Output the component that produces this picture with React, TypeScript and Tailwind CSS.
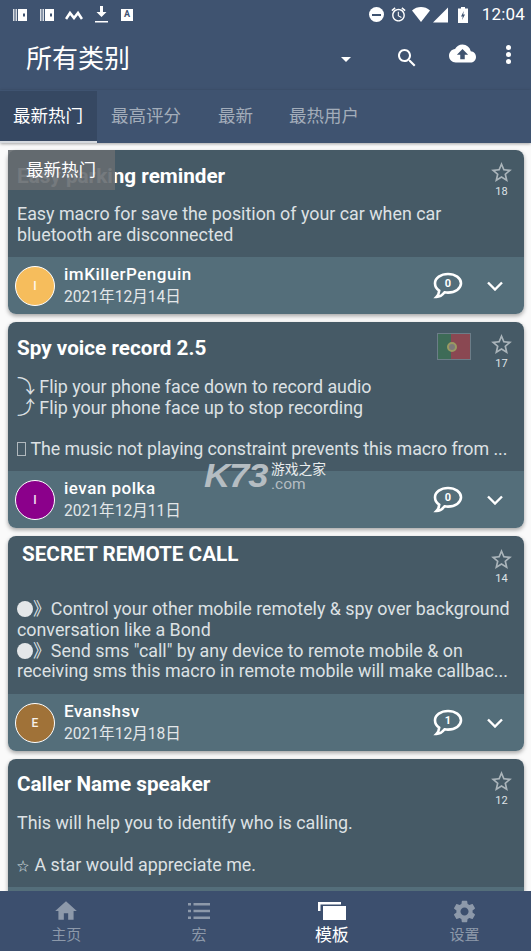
const FONT = "font-['Roboto','Noto_Sans_CJK_SC',sans-serif]";

const PATHS = {
  search:
    'M15.5 14h-.79l-.28-.27C15.41 12.59 16 11.11 16 9.5 16 5.91 13.09 3 9.5 3S3 5.91 3 9.5 5.91 16 9.5 16c1.61 0 3.09-.59 4.23-1.57l.27.28v.79l5 4.99L20.49 19l-4.99-5zm-6 0C7.01 14 5 11.99 5 9.5S7.01 5 9.5 5 14 7.01 14 9.5 11.99 14 9.5 14z',
  cloud:
    'M19.35 10.04C18.67 6.59 15.64 4 12 4 9.11 4 6.6 5.64 5.35 8.04 2.34 8.36 0 10.91 0 14c0 3.31 2.69 6 6 6h13c2.76 0 5-2.24 5-5 0-2.64-2.05-4.78-4.65-4.96zM14 13v4h-4v-4H7l5-5 5 5h-3z',
  star:
    'M22 9.24l-7.19-.62L12 2 9.19 8.63 2 9.24l5.46 4.73L5.82 21 12 17.27 18.18 21l-1.63-7.03L22 9.24zM12 15.4l-3.76 2.27 1-4.28-3.32-2.88 4.38-.38L12 6.1l1.71 4.04 4.38.38-3.32 2.88 1 4.28L12 15.4z',
  home: 'M10 20v-6h4v6h5v-8h3L12 3 2 12h3v8z',
  settings:
    'M19.14 12.94c.04-.3.06-.61.06-.94 0-.32-.02-.64-.07-.94l2.03-1.58c.18-.14.23-.41.12-.61l-1.92-3.32c-.12-.22-.37-.29-.59-.22l-2.39.96c-.5-.38-1.03-.7-1.62-.94l-.36-2.54c-.04-.24-.24-.41-.48-.41h-3.84c-.24 0-.43.17-.47.41l-.36 2.54c-.59.24-1.13.57-1.62.94l-2.39-.96c-.22-.08-.47 0-.59.22L2.74 8.87c-.12.21-.08.47.12.61l2.03 1.58c-.05.3-.09.63-.09.94s.02.64.07.94l-2.03 1.58c-.18.14-.23.41-.12.61l1.92 3.32c.12.22.37.29.59.22l2.39-.96c.5.38 1.03.7 1.62.94l.36 2.54c.05.24.24.41.48.41h3.84c.24 0 .44-.17.47-.41l.36-2.54c.59-.24 1.13-.56 1.62-.94l2.39.96c.22.08.47 0 .59-.22l1.92-3.32c.12-.22.07-.47-.12-.61l-2.01-1.58zM12 15.6c-1.98 0-3.6-1.62-3.6-3.6s1.62-3.6 3.6-3.6 3.6 1.62 3.6 3.6-1.62 3.6-3.6 3.6z',
  alarm:
    'M22 5.72l-4.6-3.86-1.29 1.53 4.6 3.86L22 5.72zM7.88 3.39L6.6 1.86 2 5.71l1.29 1.53 4.59-3.85zM12.5 8H11v6l4.75 2.85.75-1.23-4-2.37V8zM12 4c-4.97 0-9 4.03-9 9s4.02 9 9 9c4.97 0 9-4.03 9-9s-4.03-9-9-9zm0 16c-3.87 0-7-3.13-7-7s3.13-7 7-7 7 3.13 7 7-3.13 7-7 7z',
};

function Icon({ d, className }: { d: string; className: string }) {
  return (
    <svg viewBox="0 0 24 24" fill="currentColor" className={className}>
      <path d={d} />
    </svg>
  );
}

function WalletIcon({ className }: { className: string }) {
  return (
    <svg viewBox="0 0 14 12" fill="currentColor" className={className}>
      <path opacity="0.8" d="M0 0h1.500v12H0zM2.500 0h1.500v12H2.500z" />
      <path fillRule="evenodd" d="M5 0h9v12H5zM10 4.500v3h2v-3z" />
    </svg>
  );
}

function StatusBar() {
  return (
    <div className="h-[29px] flex items-center justify-between pl-[13px] pr-[6px] text-white">
      <div className="flex items-center">
        <WalletIcon className="w-[14px] h-[12px]" />
        <WalletIcon className="w-[14px] h-[12px] ml-[13px]" />
        <svg viewBox="0 0 18 10" fill="none" stroke="currentColor" strokeWidth="2.6" className="w-[18px] h-[10px] ml-[11px]">
          <path d="M1 9l4-6 4 5 4-5 4 6" />
        </svg>
        <svg viewBox="0 0 13 17" fill="currentColor" className="w-[13px] h-[17px] ml-[12px]">
          <path d="M5 0h3v6h3.5L6.5 11 1.5 6H5zM0 15h13v1.6H0z" />
        </svg>
        <div className="w-[12px] h-[12px] ml-[13px] bg-white text-[#3f5370] text-[9px] leading-[11px] font-bold text-center">A</div>
      </div>
      <div className="flex items-center">
        <div className="w-[15px] h-[15px] rounded-full bg-white flex items-center justify-center">
          <div className="w-[9px] h-[2px] bg-[#3f5370]" />
        </div>
        <Icon d={PATHS.alarm} className="w-[17px] h-[17px] ml-[6px]" />
        <svg viewBox="0 0 36 16" fill="currentColor" className="w-[36px] h-[16px] ml-[5px]">
          <path d="M0 3.500C2.500 1 5.800 0 9 0s6.500 1 9 3.500L9 15z" />
          <path d="M21 15.500L36 0.500v15z" />
        </svg>
        <svg viewBox="0 0 10 16" fill="currentColor" className="w-[10px] h-[16px] ml-[10px]">
          <path fillRule="evenodd" d="M3 0h4v1.500h3V16H0V1.500h3zM5.800 4L3 9.500h1.800L4 13l3-5.500H5.200z" />
        </svg>
        <span className="ml-[14px] text-[17px] leading-none tracking-[0.2px]">12:04</span>
      </div>
    </div>
  );
}

function Toolbar() {
  return (
    <div className="h-[61px] flex items-start text-white">
      <div className="pl-[26px] pt-[13px] text-[26px] leading-[35px] flex-1">所有类别</div>
      <div className="w-0 h-0 mt-[28px] border-x-[5px] border-x-transparent border-t-[5px] border-t-white" />
      <Icon d={PATHS.search} className="w-[24px] h-[24px] mt-[17px] ml-[44px]" />
      <Icon d={PATHS.cloud} className="w-[27px] h-[27px] mt-[11px] ml-[30px]" />
      <div className="flex flex-col gap-[2px] mt-[16px] ml-[30px] mr-[20px]">
        <div className="w-[5px] h-[5px] rounded-full bg-white" />
        <div className="w-[5px] h-[5px] rounded-full bg-white" />
        <div className="w-[5px] h-[5px] rounded-full bg-white" />
      </div>
    </div>
  );
}

function Tabs() {
  return (
    <div className="h-[53px] flex text-[17.500px] text-[#a3adba] shadow-[0_1px_3px_rgba(0,0,0,0.35)] relative z-10 bg-[#3f5370]">
      <div className="w-[97px] h-[52px] mt-px bg-[#364862] border-b-2 border-[#d5d9de] text-white pl-[13px] pt-[12px] leading-[26px]">最新热门</div>
      <div className="pl-[14px] pt-[13px] leading-[26px]">最高评分</div>
      <div className="pl-[37px] pt-[13px] leading-[26px]">最新</div>
      <div className="pl-[36px] pt-[13px] leading-[26px]">最热用户</div>
    </div>
  );
}

function Comment({ count }: { count: number }) {
  return (
    <div className="relative w-[30px] h-[28px]">
      <svg viewBox="0 0 30 28" fill="none" className="w-[30px] h-[28px]">
        <path
          d="M15 2c7.200 0 13 4 13 9.300s-5.800 9.300-13 9.300c-1.200 0-2.300-.1-3.400-.3C9.500 23 6.500 25 3.500 25c1.500-1.500 2.500-3.500 2.700-6.300C3.500 17 2 14.300 2 11.300 2 6 7.800 2 15 2z"
          stroke="white"
          strokeWidth="2.600"
        />
      </svg>
      <span className="absolute left-0 right-0 top-[5px] text-center text-[11px] leading-[14px] font-bold text-white">{count}</span>
    </div>
  );
}

function Dot() {
  return <span className="inline-block w-[16px] h-[16px] rounded-full bg-[#e4e7e9] align-[-2px]" />;
}

interface Author {
  name: string;
  date: string;
  initial: string;
  color: string;
  comments: number;
}

interface CardProps {
  title: string;
  titleClass?: string;
  stars: number;
  starTop: string;
  bodyHeight: string;
  author?: Author;
  flag?: boolean;
  children: React.ReactNode;
}

function Card({ title, titleClass, stars, starTop, bodyHeight, author, flag, children }: CardProps) {
  return (
    <div className="ml-[8px] mr-[7px] rounded-[8px] overflow-hidden shadow-[0_2px_4px_rgba(0,0,0,0.35)] shrink-0">
      <div className={`bg-[#465a66] relative px-[9px] ${bodyHeight}`}>
        <div className={`text-white font-bold text-[20.700px] leading-[26px] ${titleClass ?? 'pt-[13px]'}`}>{title}</div>
        {flag && (
          <div className="absolute left-[429px] top-[11px] w-[34px] h-[27px] flex border border-[#6c7d88]">
            <div className="w-[40%] bg-[#3e6b57]" />
            <div className="flex-1 bg-[#8a4852]" />
            <div className="absolute left-[9px] top-[8px] w-[10px] h-[10px] rounded-full border-2 border-[#9a9a62] bg-[#7d7a7a]" />
          </div>
        )}
        <div className={`absolute right-[10px] flex flex-col items-center ${starTop}`}>
          <Icon d={PATHS.star} className="w-[25px] h-[25px] text-[#aab4ba]" />
          <span className="text-[11px] leading-[14px] text-[#dfe3e6]">{stars}</span>
        </div>
        {children}
      </div>
      <div className="h-[57px] bg-[#546e7a] flex items-center pl-[7px] pr-[21px]">
        {author && (
          <>
            <div className={`w-[40px] h-[40px] rounded-full border border-white flex items-center justify-center text-[12px] text-white/90 font-medium ${author.color}`}>{author.initial}</div>
            <div className="ml-[9px] flex-1">
              <div className="text-[17px] leading-[22px] font-medium text-white tracking-[0.5px] -translate-y-px">{author.name}</div>
              <div className="text-[15.600px] leading-[22px] text-[#e3e7e9]">{author.date}</div>
            </div>
            <Comment count={author.comments} />
            <svg viewBox="0 0 16 10" fill="none" stroke="white" strokeWidth="2.400" className="w-[16px] h-[10px] ml-[24px]">
              <path d="M1 1.500l7 7 7-7" />
            </svg>
          </>
        )}
      </div>
    </div>
  );
}

const BODY = 'text-[17.850px] leading-[20.800px] text-[#dde1e4]';

function NavItem({ label, active, children }: { label: string; active?: boolean; children: React.ReactNode }) {
  return (
    <div className={`flex-1 flex flex-col items-center pt-[8px] ${active ? 'text-white' : 'text-[#8d99aa]'}`}>
      <div className="h-[24px] flex items-center justify-center">{children}</div>
      <span className={active ? 'text-[17px] leading-[24px]' : 'text-[15px] leading-[24px]'}>{label}</span>
    </div>
  );
}

export default function App() {
  return (
    <div className={`w-[531px] h-[951px] overflow-hidden flex flex-col bg-[#fafafa] relative ${FONT}`}>
      <div className="bg-[#3f5370]">
        <StatusBar />
        <Toolbar />
      </div>
      <Tabs />

      <div className="flex-1 overflow-hidden flex flex-col gap-[8px] pt-[7px]">
        <Card
          title="Easy parking reminder"
          stars={18}
          starTop="top-[10px]"
          bodyHeight="h-[107px]"
          author={{ name: 'imKillerPenguin', date: '2021年12月14日', initial: 'I', color: 'bg-[#f6bd5c]', comments: 0 }}
        >
          <p className={`${BODY} mt-[15px]`}>
            Easy macro for save the position of your car when car
            <br />
            bluetooth are disconnected
          </p>
        </Card>
        <Card
          title="Spy voice record 2.5"
          stars={17}
          starTop="top-[10px]"
          bodyHeight="h-[149px]"
          author={{ name: 'ievan polka', date: '2021年12月11日', initial: 'I', color: 'bg-[#8b008b]', comments: 0 }}
          flag
        >
          <p className={`${BODY} mt-[16px] whitespace-nowrap`}>
            ⤵ Flip your phone face down to record audio
            <br />
            ⤴ Flip your phone face up to stop recording
            <br />
            <br />
            <span className="inline-block w-[9px] h-[14px] border border-[#b0b8bd] align-[-1px]" /> <span className="tracking-[-0.06px]">The music not playing constraint prevents this macro from ...</span>
          </p>
        </Card>
        <Card
          title="SECRET REMOTE CALL"
          titleClass="pt-[5px] pl-[5px]"
          stars={14}
          starTop="top-[11px]"
          bodyHeight="h-[158px]"
          author={{ name: 'Evanshsv', date: '2021年12月18日', initial: 'E', color: 'bg-[#a07238]', comments: 1 }}
        >
          <p className={`${BODY} mt-[32px] whitespace-nowrap`}>
            <Dot />》Control your other mobile remotely &amp; spy over background
            <br />
            conversation like a Bond
            <br />
            <Dot />》Send sms "call" by any device to remote mobile &amp; on
            <br />
            receiving sms this macro in remote mobile will make callbac...
          </p>
        </Card>
        <Card title="Caller Name speaker" titleClass="pt-[12px]" stars={12} starTop="top-[10px]" bodyHeight="h-[128px]">
          <p className={`${BODY} mt-[16px]`}>
            This will help you to identify who is calling.
            <br />
            <br />
            <span className="text-[12px] mr-[1px]">☆</span> A star would appreciate me.
          </p>
        </Card>
      </div>

      <div className="h-[60px] bg-[#3c4f6e] flex relative z-10 -mt-px">
        <NavItem label="主页">
          <Icon d={PATHS.home} className="w-[26px] h-[26px]" />
        </NavItem>
        <NavItem label="宏">
          <svg viewBox="0 0 22 18" fill="currentColor" className="w-[22px] h-[18px]">
            <path d="M0 1h3v2.400H0zM5.500 1H22v2.400H5.500zM0 7.800h3v2.400H0zM5.500 7.800H22v2.400H5.500zM0 14.600h3V17H0zM5.500 14.600H22V17H5.500z" />
          </svg>
        </NavItem>
        <NavItem label="模板" active>
          <svg viewBox="0 0 28 18" fill="currentColor" className="w-[28px] h-[18px]">
            <path d="M0 0h23v2.500H2.500V9H0zM5 4h23v14H5z" />
          </svg>
        </NavItem>
        <NavItem label="设置">
          <Icon d={PATHS.settings} className="w-[27px] h-[27px]" />
        </NavItem>
      </div>

      <div className="absolute left-[8px] top-[150px] w-[107px] h-[40px] bg-[#666b70]/90 text-white text-[17.500px] leading-[24px] pl-[18px] pt-[8px] z-20">最新热门</div>

      <div className="absolute left-[204px] top-[463px] z-20 flex items-start text-[#b5bdc2]">
        <span className="text-[33px] leading-[26px] font-black italic font-['Liberation_Sans'] tracking-[-1px] w-[62px] origin-left scale-x-110">K73</span>
        <div className="ml-[5px] -mt-[1px] flex flex-col">
          <span className="text-[13.750px] leading-[15px] text-[#e8ebec]">游戏之家</span>
          <span className="text-[15.500px] leading-[14px]">.com</span>
        </div>
      </div>
    </div>
  );
}
